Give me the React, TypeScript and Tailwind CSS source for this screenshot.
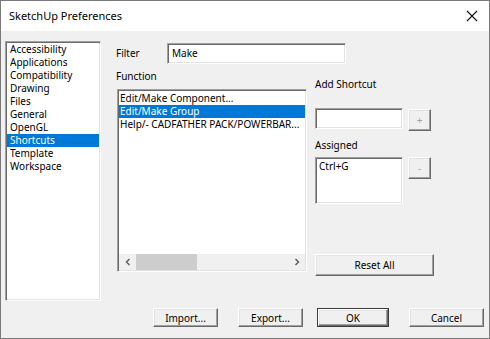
import { useState } from "react";

const categories = [
    "Accessibility",
    "Applications",
    "Compatibility",
    "Drawing",
    "Files",
    "General",
    "OpenGL",
    "Shortcuts",
    "Template",
    "Workspace",
];

const functions = [
    "Edit/Make Component...",
    "Edit/Make Group",
    "Help/- CADFATHER PACK/POWERBAR...",
];

// classic win32 3d borders
const sunken =
    "border border-t-[#a0a0a0] border-l-[#a0a0a0] border-r-white border-b-white shadow-[inset_1px_1px_0_#696969,inset_-1px_-1px_0_#e3e3e3]";
const raised =
    "border border-t-white border-l-white border-r-[#696969] border-b-[#696969] shadow-[inset_-1px_-1px_0_#a0a0a0,inset_1px_1px_0_#e3e3e3] bg-[#f0f0f0]";

function Btn({ label, className = "", disabled = false }: { label: string; className?: string; disabled?: boolean }) {
    return (
        <div
            className={`${raised} flex items-center justify-center leading-none ${disabled ? "text-[#a0a0a0]" : "text-black"} ${className}`}
        >
            {label}
        </div>
    );
}

export default function App() {
    const [category, setCategory] = useState("Shortcuts");
    const [selected, setSelected] = useState(1);

    return (
        <div
            className="w-[490px] h-[339px] flex flex-col border border-[#7a7a7a] bg-[#f0f0f0] text-[10px] text-black overflow-hidden"
            style={{ fontFamily: '"Segoe UI", "Noto Sans", sans-serif' }}
        >
            {/* Title bar */}
            <div className="h-[30px] shrink-0 bg-white flex items-center justify-between pl-[8px] pr-[10px]">
                <span className="text-[11px]">SketchUp Preferences</span>
                <svg width="12" height="12" viewBox="0 0 12 12" className="mr-[1px]">
                    <path d="M1 1 L11 11 M11 1 L1 11" stroke="#111" strokeWidth="1.1" fill="none" />
                </svg>
            </div>

            {/* Body */}
            <div className="flex-1 flex flex-col">
                <div className="flex pt-[10px] pl-[4px]">
                    {/* Category list */}
                    <div className={`${sunken} bg-white w-[96px] h-[260px] pt-[1px] pl-[1px]`}>
                        {categories.map((c) => (
                            <div
                                key={c}
                                onClick={() => setCategory(c)}
                                className={`h-[13px] leading-[13px] pl-[3px] mr-[1px] ${category === c ? "bg-[#0078d7] text-white" : ""}`}
                            >
                                {c}
                            </div>
                        ))}
                    </div>

                    <div className="flex flex-col ml-[15px]">
                        {/* Filter row */}
                        <div className="flex items-center mt-[2px] h-[21px]">
                            <span className="w-[51px]">Filter</span>
                            <div className={`${sunken} bg-white w-[179px] h-[21px] flex items-center pl-[4px]`}>
                                Make
                            </div>
                        </div>

                        <div className="flex">
                            {/* Function column */}
                            <div className="flex flex-col">
                                <div className="mt-[6px] h-[13px] leading-[13px]">Function</div>
                                <div className={`${sunken} bg-white mt-[6px] ml-[1px] w-[190px] h-[183px] flex flex-col`}>
                                    <div className="flex-1 pt-[2px] pl-[1px] pr-[1px]">
                                        {functions.map((f, i) => (
                                            <div
                                                key={f}
                                                onClick={() => setSelected(i)}
                                                className={`h-[13px] leading-[13px] pl-[1px] whitespace-nowrap overflow-hidden ${selected === i ? "bg-[#0078d7] text-white" : ""}`}
                                            >
                                                {f}
                                            </div>
                                        ))}
                                    </div>
                                    {/* horizontal scrollbar */}
                                    <div className="h-[16px] mb-[1px] mx-[1px] bg-[#f0f0f0] flex items-center">
                                        <div className="w-[17px] h-full flex items-center justify-center">
                                            <svg width="6" height="8" viewBox="0 0 6 8">
                                                <path d="M4.5 1 L1.5 4 L4.5 7" stroke="#606060" strokeWidth="1.5" fill="none" />
                                            </svg>
                                        </div>
                                        <div className="w-[61px] h-full bg-[#cdcdcd]" />
                                        <div className="flex-1" />
                                        <div className="w-[17px] h-full flex items-center justify-center">
                                            <svg width="6" height="8" viewBox="0 0 6 8">
                                                <path d="M1.5 1 L4.5 4 L1.5 7" stroke="#606060" strokeWidth="1.5" fill="none" />
                                            </svg>
                                        </div>
                                    </div>
                                </div>
                            </div>

                            {/* Shortcut column */}
                            <div className="flex flex-col ml-[8px] w-[119px]">
                                <div className="mt-[14px] h-[13px] leading-[13px]">Add Shortcut</div>
                                <div className="flex mt-[17px]">
                                    <div className={`${sunken} bg-white w-[88px] h-[21px]`} />
                                    <Btn label="+" disabled className="ml-[5px] mt-[1px] w-[23px] h-[22px]" />
                                </div>
                                <div className="mt-[8px] h-[13px] leading-[13px]">Assigned</div>
                                <div className="flex mt-[5px]">
                                    <div className={`${sunken} bg-white w-[88px] h-[47px] pl-[3px] pt-[1px] leading-[14px]`}>
                                        Ctrl+G
                                    </div>
                                    <Btn label="-" disabled className="ml-[5px] w-[23px] h-[22px]" />
                                </div>
                                <Btn label="Reset All" className="mt-[50px] w-[119px] h-[22px]" />
                            </div>
                        </div>
                    </div>
                </div>

                {/* Bottom buttons */}
                <div className="flex justify-end mt-auto mb-[11px] pr-[5px]">
                    <Btn label="Import..." className="w-[65px] h-[19px]" />
                    <Btn label="Export..." className="ml-[20px] w-[65px] h-[19px]" />
                    <div className="ml-[14px] border border-[#3c3c3c] w-[72px] h-[19px] flex">
                        <Btn label="OK" className="flex-1" />
                    </div>
                    <Btn label="Cancel" className="ml-[20px] w-[75px] h-[19px]" />
                </div>
            </div>
        </div>
    );
}
